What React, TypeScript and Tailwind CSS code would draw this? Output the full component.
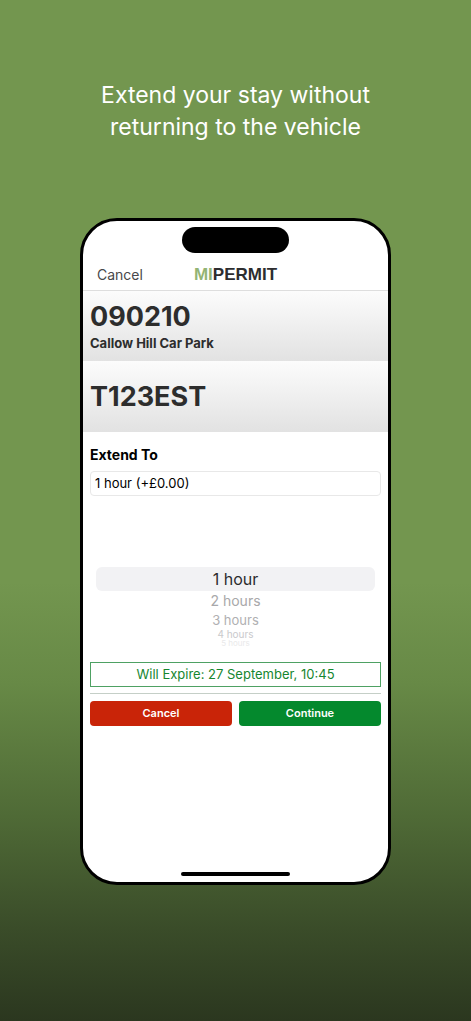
import { useState } from "react";

const durations = [
  { label: "1 hour", price: "+£0.00", style: "h-6 text-base text-[#2c2c2e]" },
  { label: "2 hours", price: "+£0.00", style: "h-5 text-sm text-[#a8a8aa]" },
  { label: "3 hours", price: "+£0.00", style: "h-[18px] text-[13px] text-[#b0b0b2]" },
  { label: "4 hours", price: "+£0.00", style: "h-[10px] text-[10px] text-[#cacacc]" },
  { label: "5 hours", price: "+£0.00", style: "h-2 text-[8px] text-[#e9e9ea]" },
];

export default function App() {
  const [selected, setSelected] = useState(0);

  return (
    <main className="min-h-screen bg-[linear-gradient(to_bottom,#73964f_0%,#73964f_57%,#678946_67%,#4f6a36_80%,#3a4c29_91%,#2b371f_100%)] px-20 pt-[79px] pb-34 font-['Inter','Liberation_Sans',sans-serif]">
      <h1 className="-mx-12 text-center text-[23px] leading-8 font-normal text-white">
        Extend your stay without
        <br />
        returning to the vehicle
      </h1>

      <section className="mt-[75px] flex min-h-[667px] flex-col overflow-hidden rounded-[37px] border-3 border-black bg-white">
        <div className="flex justify-center pt-1.5">
          <div className="h-[26px] w-[107px] rounded-full bg-black" />
        </div>

        <header className="grid h-[38px] grid-cols-[1fr_auto_1fr] items-center border-b border-[#dedede] pt-1.5">
          <button type="button" className="justify-self-start pl-3.5 text-sm text-[#48484a]">
            Cancel
          </button>
          <span className="font-['Liberation_Sans',sans-serif] text-[17px] leading-5 font-bold text-[#2d2d2f]">
            <span className="text-[#93b474]">MI</span>PERMIT
          </span>
        </header>

        <div className="flex h-[70px] flex-col justify-center bg-linear-to-b from-[#fcfcfc] to-[#e2e2e2] px-[7px] pt-0.5 text-[#2d2d2d]">
          <p className="text-[27px] leading-8 font-bold">090210</p>
          <p className="text-[13px] leading-5 font-bold">Callow Hill Car Park</p>
        </div>
        <div className="flex h-[71px] items-center bg-linear-to-b from-[#fcfcfc] to-[#e2e2e2] px-[7px] text-[#2d2d2d]">
          <p className="text-[27px] leading-8 font-bold">T123EST</p>
        </div>

        <div className="px-[7px] pt-[13px]">
          <label htmlFor="extend-to" className="block text-sm leading-5 font-bold text-black">
            Extend To
          </label>
          <select
            id="extend-to"
            value={selected}
            onChange={(e) => setSelected(Number(e.target.value))}
            className="mt-1.5 block h-[25px] w-full appearance-none rounded-sm border border-[#e8e8e8] bg-white px-1 text-[13px] text-black"
          >
            {durations.map((d, i) => (
              <option key={d.label} value={i}>
                {d.label} ({d.price})
              </option>
            ))}
          </select>

          <div className="mt-[71px] flex flex-col px-1.5">
            {durations.map((d, i) => (
              <button
                key={d.label}
                type="button"
                onClick={() => setSelected(i)}
                className={`flex items-center justify-center rounded-md leading-none ${d.style} ${
                  selected === i ? "bg-[#f2f2f4]" : ""
                }`}
              >
                {d.label}
              </button>
            ))}
          </div>

          <p className="mt-[15px] flex h-[25px] items-center justify-center border border-[#4ea163] text-[13px] text-[#16862f]">
            Will Expire: 27 September, 10:45
          </p>
          <hr className="mt-1.5 border-[#c5cfc7]" />
          <div className="mt-[7px] grid grid-cols-2 gap-[7px] text-[11px] font-semibold text-white">
            <button type="button" className="h-[25px] rounded-sm bg-[#c92408]">
              Cancel
            </button>
            <button type="button" className="h-[25px] rounded-sm bg-[#04892d]">
              Continue
            </button>
          </div>
        </div>

        <div className="mt-auto flex justify-center pb-1.5">
          <div className="h-1 w-[109px] rounded-full bg-black" />
        </div>
      </section>
    </main>
  );
}
